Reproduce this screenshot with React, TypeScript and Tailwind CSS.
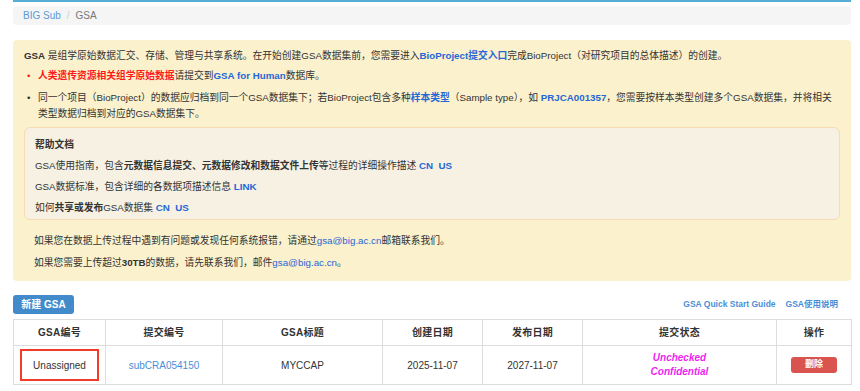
import React from "react";

const font = { fontFamily: '"Liberation Sans", Arial, "Noto Sans CJK SC", sans-serif' };

function Blue({ children, bold = true }: { children: React.ReactNode; bold?: boolean }) {
  return <span className={`text-[#2567d6] ${bold ? "font-bold" : ""}`}>{children}</span>;
}

export default function App() {
  return (
    <div className="w-[860px] h-[391px] bg-white overflow-hidden text-[#333] text-[10px]" style={font}>
      <div className="ml-[13px] w-[838px]">
        <div className="h-[2px] bg-[#56acd4]" />
        <div className="mt-[4px] h-[19px] rounded-[4px] bg-[#f5f5f5] px-[10px] flex items-center text-[10px]">
          <span className="text-[#5b9bd5]">BIG Sub</span>
          <span className="px-[6px] text-[#ccc]">/</span>
          <span className="text-[#777]">GSA</span>
        </div>

        <div className="mt-[15px] rounded-[4px] bg-[#fbf1cd] pl-[11px] pr-[11px] pt-[8px] pb-[10px] leading-[16px] text-[9.75px]">
          <p>
            <b>GSA</b> 是组学原始数据汇交、存储、管理与共享系统。在开始创建GSA数据集前，您需要进入
            <Blue>BioProject提交入口</Blue>完成BioProject（对研究项目的总体描述）的创建。
          </p>
          <div className="mt-[4px] flex">
            <span className="w-[14px] shrink-0 pl-[3px] text-[#ff1a1a]">•</span>
            <p>
              <span className="text-[#ff1a1a] font-bold">人类遗传资源相关组学原始数据</span>请提交到
              <Blue>GSA for Human</Blue>数据库。
            </p>
          </div>
          <div className="mt-[6px] flex">
            <span className="w-[14px] shrink-0 pl-[3px]">•</span>
            <p>
              同一个项目（BioProject）的数据应归档到同一个GSA数据集下；若BioProject包含多种<Blue>样本类型</Blue>
              （Sample type），如 <Blue>PRJCA001357</Blue>，您需要按样本类型创建多个GSA数据集，并将相关类型数据归档到对应的GSA数据集下。
            </p>
          </div>

          <div className="mt-[5px] rounded-[6px] border border-[#f7dbb4] bg-[#f6f1e3] pl-[10px] pr-[10px] pt-[9px] pb-[3px] flex flex-col gap-[5px]">
            <p className="font-bold">帮助文档</p>
            <p>
              GSA使用指南，包含<b>元数据信息提交、元数据修改和数据文件上传</b>等过程的详细操作描述{" "}
              <Blue>CN</Blue>&nbsp;&nbsp;<Blue>US</Blue>
            </p>
            <p>
              GSA数据标准，包含详细的各数据项描述信息 <Blue>LINK</Blue>
            </p>
            <p>
              如何<b>共享或发布</b>GSA数据集 <Blue>CN</Blue>&nbsp;&nbsp;<Blue>US</Blue>
            </p>
          </div>

          <p className="mt-[13px] pl-[10px]">
            如果您在数据上传过程中遇到有问题或发现任何系统报错，请通过<Blue bold={false}>gsa@big.ac.cn</Blue>邮箱联系我们。
          </p>
          <p className="mt-[6px] pl-[10px]">
            如果您需要上传超过<b>30TB</b>的数据，请先联系我们，邮件<Blue bold={false}>gsa@big.ac.cn</Blue>。
          </p>
        </div>

        <div className="mt-[14px] flex items-center justify-between">
          <button className="h-[19px] w-[61px] rounded-[3px] bg-[#428bca] text-white font-bold text-[10px] flex items-center justify-center">
            新建 GSA
          </button>
          <div className="flex items-center gap-[10px] pr-[13px] text-[8.5px] font-bold text-[#4a8fd6]">
            <span>GSA Quick Start Guide</span>
            <span>GSA使用说明</span>
          </div>
        </div>

        <table className="mt-[5px] w-[838px] table-fixed border-collapse text-[10px] text-center">
          <colgroup>
            <col className="w-[92px]" />
            <col className="w-[117px]" />
            <col className="w-[160px]" />
            <col className="w-[100px]" />
            <col className="w-[100px]" />
            <col className="w-[194px]" />
            <col className="w-[75px]" />
          </colgroup>
          <thead>
            <tr className="h-[26px]">
              {["GSA编号", "提交编号", "GSA标题", "创建日期", "发布日期", "提交状态", "操作"].map((h) => (
                <th key={h} className="border border-[#ddd] font-bold tracking-[0.3px]">
                  {h}
                </th>
              ))}
            </tr>
          </thead>
          <tbody>
            <tr className="h-[39px]">
              <td className="border border-[#ddd] px-[6px]">
                <div className="h-[32px] border-2 border-[#f03c28] flex items-center justify-center">Unassigned</div>
              </td>
              <td className="border border-[#ddd] text-[#4a8fd6]">subCRA054150</td>
              <td className="border border-[#ddd]">MYCCAP</td>
              <td className="border border-[#ddd]">2025-11-07</td>
              <td className="border border-[#ddd]">2027-11-07</td>
              <td className="border border-[#ddd] italic font-semibold text-[#f01ff0] leading-[14px]">
                <div>Unchecked</div>
                <div>Confidential</div>
              </td>
              <td className="border border-[#ddd]">
                <div className="flex justify-center">
                  <span className="h-[16px] w-[46px] rounded-[3px] bg-[#d9534f] text-white font-bold text-[9px] flex items-center justify-center">
                    删除
                  </span>
                </div>
              </td>
            </tr>
          </tbody>
        </table>
      </div>
    </div>
  );
}
